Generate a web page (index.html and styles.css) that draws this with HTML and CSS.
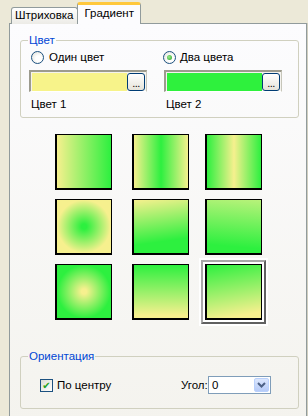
FILE: index.html
```html
<!DOCTYPE html>
<html>
<head>
<meta charset="utf-8">
<link rel="stylesheet" href="styles.css">
</head>
<body>
<div class="tabs">
  <div class="tab">Штриховка</div>
  <div class="tab active">Градиент</div>
</div>
<div class="panel">
  <fieldset class="group color-group">
    <legend>Цвет</legend>
    <div class="cols">
      <div class="col">
        <label class="radio-row"><span class="radio"></span>Один цвет</label>
        <div class="swatch"><span class="fill yellow"></span><span class="dots">...</span></div>
        <div class="caption">Цвет 1</div>
      </div>
      <div class="col">
        <label class="radio-row"><span class="radio checked"></span>Два цвета</label>
        <div class="swatch"><span class="fill green"></span><span class="dots">...</span></div>
        <div class="caption">Цвет 2</div>
      </div>
    </div>
  </fieldset>

  <div class="grid">
    <div class="cell"><div class="sq g1"></div></div>
    <div class="cell"><div class="sq g2"></div></div>
    <div class="cell"><div class="sq g3"></div></div>
    <div class="cell"><div class="sq g4"></div></div>
    <div class="cell"><div class="sq g5"></div></div>
    <div class="cell"><div class="sq g6"></div></div>
    <div class="cell"><div class="sq g7"></div></div>
    <div class="cell"><div class="sq g8"></div></div>
    <div class="cell selected"><div class="frame"><div class="sq g9"></div></div></div>
  </div>

  <fieldset class="group orient-group">
    <legend>Ориентация</legend>
    <div class="orient-row">
      <label class="check-row"><span class="check">&#10004;</span>По центру</label>
      <span class="angle-label">Угол:</span>
      <div class="combo"><span class="combo-val">0</span><span class="combo-btn"><svg width="9" height="6" viewBox="0 0 9 6"><path d="M1 1 L4.5 4.5 L8 1" fill="none" stroke="#4D6185" stroke-width="2"/></svg></span></div>
    </div>
  </fieldset>
</div>
</body>
</html>
```
FILE: styles.css
```css
html, body {
  margin: 0;
  padding: 0;
}
body {
  width: 308px;
  height: 416px;
  overflow: hidden;
  background: #ECE9D8;
  font-family: "Liberation Sans", Arial, sans-serif;
  font-size: 11px;
  color: #000;
}
.tabs {
  display: flex;
  align-items: flex-end;
  height: 24px;
  padding-left: 11px;
}
.tab {
  box-sizing: border-box;
  height: 17px;
  padding: 0 4px 0 3px;
  border: 1px solid #919B9C;
  border-bottom: none;
  border-radius: 3px 3px 0 0;
  background: linear-gradient(#FFFFFF, #ECEBE6);
  line-height: 15px;
  font-size: 11.5px;
}
.tab.active {
  position: relative;
  z-index: 1;
  height: 22px;
  margin-left: -1px;
  padding: 0 6px 0 6px;
  border-top: 3px solid #FFC83C;
  border-radius: 3px 3px 0 0;
  background: #FCFCFE;
  line-height: 16px;
}
.panel {
  margin: -1px 0 0 9px;
  width: 296px;
  height: 400px;
  border: 1px solid #919B9C;
  border-bottom: none;
  background: linear-gradient(#FCFCFE, #F4F3EE);
  box-shadow: 1px 0 0 #D0CEBF;
}
.group {
  margin: 0 7px 0 10px;
  border: 1px solid #D0D0BF;
  border-radius: 3px;
  padding: 0 8px 0 8px;
  min-width: 0;
}
.group legend {
  color: #0046D5;
  padding: 0 1px;
  margin-left: -1px;
  line-height: 14px;
  font-size: 11.5px;
}
.color-group {
  margin-top: 9px;
  padding-bottom: 6px;
}
.cols {
  display: grid;
  grid-template-columns: 135px 1fr;
}
.radio-row {
  display: flex;
  align-items: center;
  height: 16px;
  margin-top: 2px;
  gap: 5px;
  padding-left: 2px;
  font-size: 11.5px;
}
.col + .col .radio-row {
  padding-left: 0;
  margin-left: -1px;
  gap: 4px;
}
.radio {
  box-sizing: border-box;
  width: 13px;
  height: 13px;
  border-radius: 50%;
  border: 1px solid #1C5180;
  background: radial-gradient(circle at 60% 60%, #FFFFFF 30%, #DCDCD4 100%);
  display: inline-flex;
  align-items: center;
  justify-content: center;
}
.radio.checked::after {
  content: "";
  width: 5px;
  height: 5px;
  border-radius: 50%;
  background: radial-gradient(circle at 40% 40%, #9CEB8C, #21A121);
}
.swatch {
  box-sizing: border-box;
  display: flex;
  align-items: center;
  width: 118px;
  height: 22px;
  margin-top: 5px;
  border-style: solid;
  border-width: 2px 1px 1px 2px;
  border-color: #9C9B8E #C7C6BA #FFFFFF #9C9B8E;
  background: #F4F3EE;
  padding: 1px 1px 1px 1px;
}
.fill {
  flex: 1;
  height: 18px;
}
.fill.yellow { background: #F7F38A; }
.fill.green { background: #2EF13D; }
.dots {
  box-sizing: border-box;
  width: 18px;
  height: 18px;
  border: 1px solid #003C74;
  border-radius: 3px;
  background: linear-gradient(#FFFFFF, #E6E4DA);
  font-size: 11px;
  line-height: 18px;
  text-align: center;
  letter-spacing: -0.5px;
}
.caption {
  margin-top: 5px;
  padding-left: 2px;
  line-height: 14px;
  font-size: 11.5px;
}
.col + .col .caption { padding-left: 2px; }

.grid {
  display: grid;
  grid-template-columns: 77px 73px 57px;
  grid-auto-rows: 56px;
  row-gap: 9px;
  margin: 16px 0 0 45px;
}
.cell {
  display: flex;
}
.sq {
  box-sizing: border-box;
  width: 57px;
  height: 56px;
  border-style: solid;
  border-color: #000;
  border-width: 1px 1px 2px 2px;
}
.cell.selected {
  margin: -6px;
  background: #FFFFFF;
  padding: 2px;
}
.frame {
  flex: 1;
  display: flex;
  border-style: solid;
  border-width: 2px 2px 2px 2px;
  border-color: #A8A8A8 #606060 #606060 #A8A8A8;
  padding: 2px 1px 0 2px;
}
.g1 { background: linear-gradient(to right, #F6F08E, #2DF03F); }
.g2 { background: linear-gradient(to right, #F6F08E, #2DF03F 50%, #F6F08E); }
.g3 { background: linear-gradient(to right, #2DF03F, #F6F08E 50%, #2DF03F); }
.g4 { background: radial-gradient(closest-side circle, #2DF03F 10%, #F6F08E 100%); }
.g5 { background: linear-gradient(172deg, #F6F08E 0%, #2DF03F 75%); }
.g6 { background: linear-gradient(185deg, #B8F27A 0%, #2DF03F 85%); }
.g7 { background: radial-gradient(closest-side circle, #F6F08E 10%, #2DF03F 100%); }
.g8 { background: linear-gradient(to top, #F6F08E 5%, #2DF03F 100%); }
.g9 { background: linear-gradient(170deg, #2DF03F 0%, #F6F08E 90%); }

.orient-group {
  margin-top: 29px;
  padding-bottom: 14px;
}
.orient-row {
  display: flex;
  align-items: center;
  margin-top: 13px;
  padding-left: 11px;
  height: 18px;
}
.check-row {
  display: flex;
  align-items: center;
  gap: 4px;
  font-size: 11.5px;
  width: 141px;
}
.check {
  box-sizing: border-box;
  width: 13px;
  height: 13px;
  border: 1px solid #1C5180;
  background: linear-gradient(135deg, #DCDCD4, #FFFFFF);
  color: #21A121;
  font-size: 10px;
  line-height: 11px;
  text-align: center;
  font-family: "DejaVu Sans", sans-serif;
  font-weight: bold;
}
.angle-label {
  width: 27px;
  font-size: 11.5px;
}
.combo {
  box-sizing: border-box;
  display: flex;
  align-items: center;
  width: 63px;
  height: 18px;
  border: 1px solid #7F9DB9;
  background: #FFFFFF;
  padding: 1px;
}
.combo-val {
  flex: 1;
  padding-left: 2px;
  font-size: 11.5px;
}
.combo-btn {
  box-sizing: border-box;
  width: 15px;
  height: 14px;
  border-radius: 2px;
  background: linear-gradient(#DCE7FD, #B6CBF8);
  border: 1px solid #BAD1FC;
  display: flex;
  align-items: center;
  justify-content: center;
}
```
